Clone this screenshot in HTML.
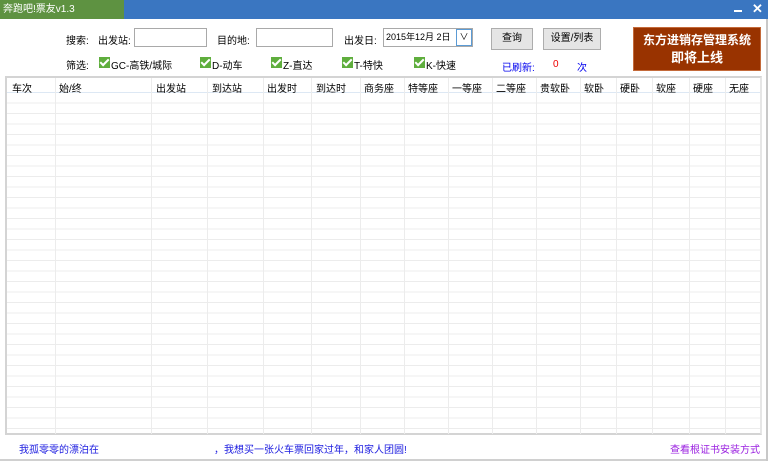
<!DOCTYPE html>
<html><head><meta charset="utf-8"><style>
*{margin:0;padding:0;box-sizing:border-box}
body{width:768px;height:461px;background:#fff;position:relative;overflow:hidden;font-family:"Liberation Sans","Noto Sans CJK SC","WenQuanYi Zen Hei",sans-serif;font-size:10px;color:#000}
.a{position:absolute;white-space:nowrap}
.inp{position:absolute;border:1px solid #a9a9a9;background:#fff;height:19px}
.btn{position:absolute;border:1px solid #adadad;background:#e5e5e5;height:22px;text-align:center;line-height:20px;font-size:10px}
.cb{position:absolute;width:11px;height:11px;background:#5fae3d}
.cb::after{content:"";position:absolute;left:3px;top:0px;width:3px;height:7px;border:solid #fff;border-width:0 2px 2px 0;transform:rotate(45deg)}
.vl{position:absolute;top:78px;height:356px;width:1px;background:#ececec}
</style></head><body>
<div class="a" style="left:0;top:0;width:768px;height:19px;background:#3a76c1"></div>
<div class="a" style="left:0;top:0;width:124px;height:19px;background:#5e9241;color:#fff;font-size:10px;line-height:19px;padding-left:3px">奔跑吧!票友v1.3</div>
<div class="a" style="left:734px;top:10px;width:8px;height:2px;background:#fff"></div>
<div class="a" style="left:752px;top:1px;color:#fff;font-size:13px;font-weight:bold">✕</div>
<div class="a" style="left:766px;top:19px;width:2px;height:442px;background:#c8c8c8"></div>

<div class="a" style="left:66px;top:32px">搜索:</div>
<div class="a" style="left:98px;top:32px">出发站:</div>
<div class="inp" style="left:134px;top:28px;width:73px"></div>
<div class="a" style="left:217px;top:32px">目的地:</div>
<div class="inp" style="left:256px;top:28px;width:77px"></div>
<div class="a" style="left:344px;top:32px">出发日:</div>
<div class="inp" style="left:383px;top:28px;width:90px;font-size:9px;line-height:17px;padding-left:2px">2015年12月 2日</div>
<div class="a" style="left:456px;top:29px;width:16px;height:17px;border:1px solid #5b9bd5;background:#fff;text-align:center;font-size:9px;line-height:15px">∨</div>
<div class="btn" style="left:491px;top:28px;width:42px">查询</div>
<div class="btn" style="left:543px;top:28px;width:58px">设置/列表</div>
<div class="a" style="left:633px;top:27px;width:128px;height:44px;background:#993300;border:1px solid #c46a3a;color:#fff;font-weight:bold;text-align:center;font-size:12px;line-height:18px;padding-top:3px">东方进销存管理系统<br><span style="font-size:13px">即将上线</span></div>

<div class="a" style="left:66px;top:57px">筛选:</div>
<div class="cb" style="left:99px;top:57px"></div><div class="a" style="left:111px;top:57px">GC-高铁/城际</div>
<div class="cb" style="left:200px;top:57px"></div><div class="a" style="left:212px;top:57px">D-动车</div>
<div class="cb" style="left:271px;top:57px"></div><div class="a" style="left:283px;top:57px">Z-直达</div>
<div class="cb" style="left:342px;top:57px"></div><div class="a" style="left:354px;top:57px">T-特快</div>
<div class="cb" style="left:414px;top:57px"></div><div class="a" style="left:426px;top:57px">K-快速</div>
<div class="a" style="left:502px;top:59px;color:#0000ee">已刷新:</div>
<div class="a" style="left:553px;top:59px;color:#ee0000">0</div>
<div class="a" style="left:577px;top:59px;color:#0000ee">次</div>

<div class="a" style="left:5px;top:76px;width:757px;height:359px;border:2px solid #d4d4d4;border-right-color:#e6e6e6;background:repeating-linear-gradient(to bottom,#fff 0,#fff 9.5px,#ececec 9.5px,#ececec 10.5px);background-position:0 15px"></div>
<div class="a" style="left:7px;top:78px;width:753px;height:15px;background:#fff;border-bottom:1px solid #dde8f4"></div>
<div class="vl" style="left:55px"></div><div class="vl" style="left:151px"></div><div class="vl" style="left:207px"></div><div class="vl" style="left:263px"></div><div class="vl" style="left:311px"></div><div class="vl" style="left:360px"></div><div class="vl" style="left:404px"></div><div class="vl" style="left:448px"></div><div class="vl" style="left:492px"></div><div class="vl" style="left:536px"></div><div class="vl" style="left:580px"></div><div class="vl" style="left:616px"></div><div class="vl" style="left:652px"></div><div class="vl" style="left:689px"></div><div class="vl" style="left:725px"></div>
<div class="a" style="left:12px;top:80px">车次</div>
<div class="a" style="left:59px;top:80px">始/终</div>
<div class="a" style="left:156px;top:80px">出发站</div>
<div class="a" style="left:212px;top:80px">到达站</div>
<div class="a" style="left:267px;top:80px">出发时</div>
<div class="a" style="left:316px;top:80px">到达时</div>
<div class="a" style="left:364px;top:80px">商务座</div>
<div class="a" style="left:408px;top:80px">特等座</div>
<div class="a" style="left:452px;top:80px">一等座</div>
<div class="a" style="left:496px;top:80px">二等座</div>
<div class="a" style="left:540px;top:80px">贵软卧</div>
<div class="a" style="left:584px;top:80px">软卧</div>
<div class="a" style="left:620px;top:80px">硬卧</div>
<div class="a" style="left:656px;top:80px">软座</div>
<div class="a" style="left:693px;top:80px">硬座</div>
<div class="a" style="left:729px;top:80px">无座</div>

<div class="a" style="left:19px;top:441px;color:#2020e0">我孤零零的漂泊在</div>
<div class="a" style="left:214px;top:441px;color:#2020e0">，我想买一张火车票回家过年，和家人团圆!</div>
<div class="a" style="left:670px;top:441px;color:#9a20e0">查看根证书安装方式</div>
<div class="a" style="left:0;top:459px;width:766px;height:2px;background:#d0d0d0"></div>
</body></html>
